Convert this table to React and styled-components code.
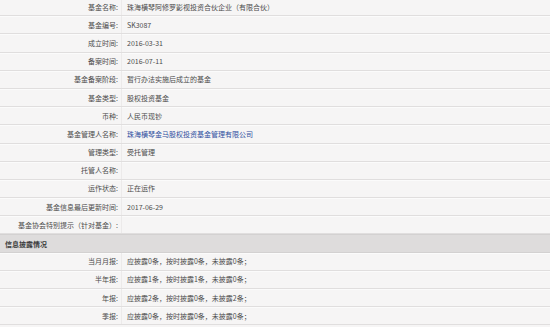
import React from 'react';
import styled, { createGlobalStyle } from 'styled-components';

const GlobalStyle = createGlobalStyle`
  html, body {
    margin: 0;
    padding: 0;
    background: #f6f5f5;
  }
  body {
    font-family: "Noto Sans CJK SC", "Noto Sans", sans-serif;
    overflow: hidden;
  }
`;

const Table = styled.div`
  width: 550px;
  margin-top: -2px;
  color: #4c4c4c;
  font-size: 7px;
`;

const Row = styled.div`
  display: grid;
  grid-template-columns: 122px 1fr;
  height: 18.2px;
  box-sizing: border-box;
  border-bottom: 1px solid #e0dede;
  box-shadow: inset 0 1px 0 #fbfbfb;
`;

const Label = styled.div`
  display: flex;
  align-items: center;
  justify-content: flex-end;
  padding-right: 3px;
  border-right: 1px solid #eceaea;
  white-space: nowrap;
`;

const Value = styled.div`
  display: flex;
  align-items: center;
  padding-left: 5px;
  white-space: nowrap;
  color: ${p => (p.$link ? '#2f4f9f' : '#4c4c4c')};
`;

const SectionHead = styled.div`
  display: flex;
  align-items: center;
  height: 18.2px;
  box-sizing: border-box;
  padding-left: 5px;
  background: #dedcdc;
  border-top: 1px solid #d3d1d1;
  border-bottom: 1px solid #d3d1d1;
  font-weight: bold;
  color: #3c3c3c;
`;

const info = [
  ['基金名称:', '珠海横琴阿修罗影视投资合伙企业（有限合伙）'],
  ['基金编号:', 'SK3087'],
  ['成立时间:', '2016-03-31'],
  ['备案时间:', '2016-07-11'],
  ['基金备案阶段:', '暂行办法实施后成立的基金'],
  ['基金类型:', '股权投资基金'],
  ['币种:', '人民币现钞'],
  ['基金管理人名称:', '珠海横琴金马股权投资基金管理有限公司', true],
  ['管理类型:', '受托管理'],
  ['托管人名称:', ''],
  ['运作状态:', '正在运作'],
  ['基金信息最后更新时间:', '2017-06-29'],
  ['基金协会特别提示（针对基金）:', ''],
];

const reports = [
  ['当月月报:', '应披露0条，按时披露0条，未披露0条；'],
  ['半年报:', '应披露1条，按时披露1条，未披露0条；'],
  ['年报:', '应披露2条，按时披露0条，未披露2条；'],
  ['季报:', '应披露0条，按时披露0条，未披露0条；'],
];

export default function App() {
  return (
    <>
      <GlobalStyle />
      <Table>
        {info.map(([k, v, link]) => (
          <Row key={k}>
            <Label>{k}</Label>
            <Value $link={link}>{v}</Value>
          </Row>
        ))}
        <SectionHead>信息披露情况</SectionHead>
        {reports.map(([k, v]) => (
          <Row key={k}>
            <Label>{k}</Label>
            <Value>{v}</Value>
          </Row>
        ))}
      </Table>
    </>
  );
}
